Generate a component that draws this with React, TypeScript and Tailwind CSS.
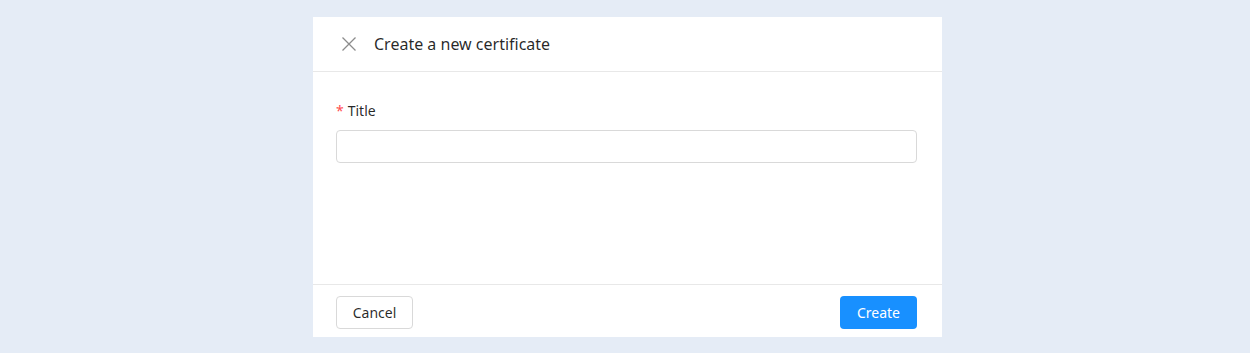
export default function App() {
  return (
    <div className="h-[353px] w-full bg-[#e5ecf6] pt-[17px] font-['Noto_Sans',sans-serif] text-[rgba(0,0,0,0.85)]">
      <div className="ml-[313px] flex h-[320px] w-[629px] flex-col bg-white">
        <div className="flex h-[55px] items-center border-b border-[#e8e8e8] pl-[23px] pr-[25px]">
          <svg className="ml-[6px] mr-[18px] h-[14px] w-[14px] text-[#8c8c8c]" viewBox="0 0 14 14" fill="none" stroke="currentColor" strokeWidth="1.3">
            <path d="M0.5 0.5L13.5 13.5M13.5 0.5L0.5 13.5" />
          </svg>
          <span className="text-base">Create a new certificate</span>
        </div>
        <div className="flex-1 pl-[23px] pr-[25px] pt-[29px]">
          <div className="mb-[9px] flex items-center text-sm">
            <span className="mr-1 text-[#ff4d4f]">*</span>
            <span>Title</span>
          </div>
          <input className="h-[33px] w-full rounded border border-[#d9d9d9] px-3 text-sm outline-none" />
        </div>
        <div className="flex h-[53px] items-start justify-between border-t border-[#e8e8e8] pl-[23px] pr-[25px] pt-[11px]">
          <button className="h-[33px] w-[77px] rounded border border-[#d9d9d9] bg-white text-sm">Cancel</button>
          <button className="h-[33px] w-[77px] rounded bg-[#1890ff] text-sm text-white">Create</button>
        </div>
      </div>
    </div>
  )
}
